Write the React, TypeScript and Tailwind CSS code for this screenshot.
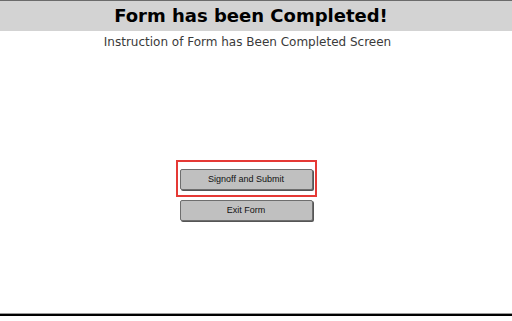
import React from "react";

const App = () => {
    return (
        <div className="w-[512px] h-[321px] bg-white font-['DejaVu_Sans',sans-serif] flex flex-col">
            <div className="h-[31px] bg-[#d3d3d3] border-t border-[#6b6b6b] flex items-center justify-center pr-[10px]">
                <h1 className="text-[18px] font-bold text-black leading-none">Form has been Completed!</h1>
            </div>
            <div className="text-center text-[12px] text-[#3a3a3a] mt-[3px] leading-[17px] pr-[17px]">Instruction of Form has Been Completed Screen</div>

            <div className="flex flex-col items-center mt-[109px] pr-[20px]">
                <div className="border-2 border-[#e53935] w-[141px] h-[37px] flex items-start justify-center pt-[7px]">
                    <button
                        type="button"
                        className="w-[133px] h-[21px] bg-[#c0c0c0] border border-[#6e6e6e] rounded-[2px] shadow-[1px_1px_0_#555] text-[9px] text-[#111] font-['Liberation_Sans',sans-serif]"
                    >
                        Signoff and Submit
                    </button>
                </div>
                <button
                    type="button"
                    className="mt-[3px] w-[133px] h-[21px] bg-[#c0c0c0] border border-[#6e6e6e] rounded-[2px] shadow-[1px_1px_0_#555] text-[9px] text-[#111] font-['Liberation_Sans',sans-serif]"
                >
                    Exit Form
                </button>
            </div>

            <div className="mt-auto mb-[5px] border-t border-[#9a9a9a] border-b-2 border-b-black" />
        </div>
    );
};

export default App;
